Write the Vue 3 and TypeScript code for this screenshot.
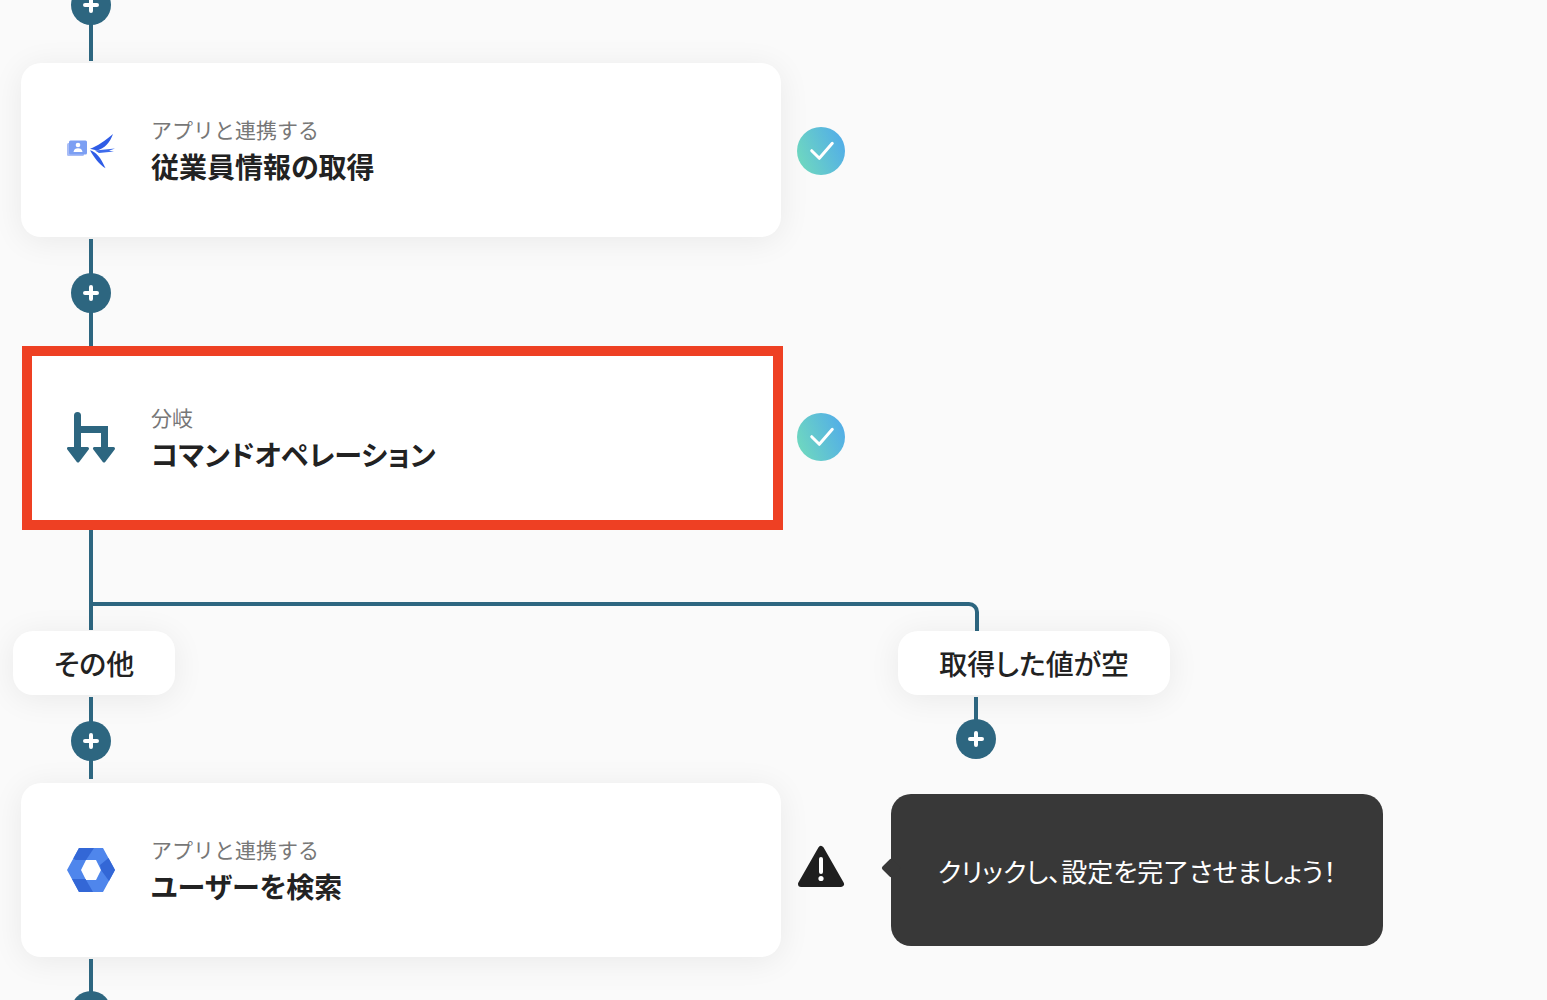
<script setup lang="ts">
interface Step {
  sub: string
  title: string
}
const employee: Step = { sub: 'アプリと連携する', title: '従業員情報の取得' }
const branch: Step = { sub: '分岐', title: 'コマンドオペレーション' }
const search: Step = { sub: 'アプリと連携する', title: 'ユーザーを検索' }
</script>

<template>
  <div class="page">
    <div class="flow">
      <div class="link link-top"><span class="plus plus-first"><svg viewBox="0 0 16 16"><path d="M8 2v12M2 8h12" /></svg></span></div>

      <div class="row">
        <div class="card">
          <svg class="app-icon" viewBox="0 0 48 48">
            <rect x="0" y="17" width="17" height="13" rx="1.5" fill="#a9bdf6" />
            <rect x="2" y="14.500" width="18" height="14" rx="1.500" fill="#7c9ff3" />
            <circle cx="11" cy="19" r="2.300" fill="#fff" />
            <path d="M6.500 26c.5-3 2-3.800 4.500-3.800s4 .8 4.500 3.800z" fill="#fff" />
            <path d="M23 22.800C30 20.500 39 14 46 8c-3 8.500-8.500 14.500-16 16.500z" fill="#2f5ce6" />
            <path d="M23 24.300c6 1.500 10.500 7 15.500 18C32 38.500 27 31.500 23 24.300z" fill="#2f5ce6" />
            <path d="M28 24.500l20-2-6 2.200 5 .8-15 1.500z" fill="#3f6cec" />
          </svg>
          <div class="text">
            <div class="sub">{{ employee.sub }}</div>
            <div class="title">{{ employee.title }}</div>
          </div>
        </div>
        <svg class="status status-low" viewBox="0 0 48 48">
          <defs>
            <linearGradient id="okA" x1="0" y1="0.700" x2="1" y2="0.300">
              <stop offset="0" stop-color="#6fd8bf" />
              <stop offset="1" stop-color="#52ade8" />
            </linearGradient>
          </defs>
          <circle cx="24" cy="24" r="24" fill="url(#okA)" />
          <path d="M14.700 23.700l7.600 7.600 13-15" fill="none" stroke="#fff" stroke-width="3" stroke-linecap="round" stroke-linejoin="round" />
        </svg>
      </div>

      <div class="link link-mid"><span class="plus plus-mid"><svg viewBox="0 0 16 16"><path d="M8 2v12M2 8h12" /></svg></span></div>

      <div class="row row-marked">
        <div class="marked">
          <svg class="branch-icon" viewBox="0 0 48 54">
            <path d="M10.500 4.500V38M10.500 18.500H37.500V38" fill="none" stroke="#2d6680" stroke-width="7" stroke-linecap="round" />
            <path d="M1.500 37.500h19L11 50zM27.500 37.500h19L37 50z" fill="#2d6680" stroke="#2d6680" stroke-width="3" stroke-linejoin="round" />
          </svg>
          <div class="text">
            <div class="sub">{{ branch.sub }}</div>
            <div class="title">{{ branch.title }}</div>
          </div>
        </div>
        <svg class="status status-high" viewBox="0 0 48 48">
          <defs>
            <linearGradient id="okB" x1="0" y1="0.700" x2="1" y2="0.300">
              <stop offset="0" stop-color="#6fd8bf" />
              <stop offset="1" stop-color="#52ade8" />
            </linearGradient>
          </defs>
          <circle cx="24" cy="24" r="24" fill="url(#okB)" />
          <path d="M14.700 23.700l7.600 7.600 13-15" fill="none" stroke="#fff" stroke-width="3" stroke-linecap="round" stroke-linejoin="round" />
        </svg>
      </div>

      <div class="branches">
        <div class="elbow"></div>
        <div class="link link-split"></div>
        <div class="columns">
          <div class="col">
            <div class="label">その他</div>
            <div class="link link-left"><span class="plus plus-left"><svg viewBox="0 0 16 16"><path d="M8 2v12M2 8h12" /></svg></span></div>
          </div>
          <div class="col col-right">
            <div class="label">取得した値が空</div>
            <div class="link link-right"><span class="plus plus-right"><svg viewBox="0 0 16 16"><path d="M8 2v12M2 8h12" /></svg></span></div>
          </div>
        </div>
      </div>

      <div class="row">
        <div class="card">
          <svg class="app-icon hex" viewBox="0 0 48 44">
            <path fill-rule="evenodd" d="M12 0H36L48 22 36 44H12L0 22zM19 12L14 22l5 10H29L34 22 29 12z" fill="#4f86ec" />
            <path d="M12 0H27L19 12H8.500L6.300 10.500z" fill="#3367d6" />
            <path d="M41.500 10L48 22 42 33 34 22 33 17z" fill="#3367d6" />
            <path d="M5 31H18.500L26 44H12z" fill="#3367d6" />
          </svg>
          <div class="text">
            <div class="sub">{{ search.sub }}</div>
            <div class="title">{{ search.title }}</div>
          </div>
        </div>
        <svg class="status status-warn" viewBox="0 0 48 48">
          <path d="M24 5L44 40H4z" fill="#1f1f1f" stroke="#1f1f1f" stroke-width="6" stroke-linejoin="round" />
          <path d="M24 15v13" stroke="#fff" stroke-width="4" stroke-linecap="round" />
          <circle cx="24" cy="34.500" r="2.600" fill="#fff" />
        </svg>
        <div class="tip">クリックし、設定を完了させましょう！</div>
      </div>

      <div class="link link-bottom"><span class="plus plus-last"><svg viewBox="0 0 16 16"><path d="M8 2v12M2 8h12" /></svg></span></div>
    </div>
  </div>
</template>

<style scoped>
.page {
  width: 1547px;
  height: 1000px;
  overflow: hidden;
  background: #fafafa;
  font-family: "Noto Sans CJK JP", "Noto Sans", sans-serif;
  color: #222;
}
.flow {
  display: flex;
  flex-direction: column;
  align-items: flex-start;
  padding-left: 21px;
  margin-top: -15px;
}
.link {
  width: 4px;
  margin-left: 68px;
  background: #2d6680;
  position: relative;
  flex: none;
}
.link-top { height: 76px; margin-bottom: 2px; }
.link-mid { height: 107px; margin-top: 2px; }
.link-bottom { height: 60px; margin-top: 2px; }
.link-split { height: 100px; margin-bottom: 1px; }
.link-left { height: 82px; margin: 2px 0 2px 76px; }
.link-right { height: 30px; margin: 2px 0 0 76px; }
.plus {
  position: absolute;
  left: -18px;
  width: 40px;
  height: 40px;
  border-radius: 50%;
  background: #2d6680;
  display: flex;
  align-items: center;
  justify-content: center;
}
.plus svg {
  width: 16px;
  height: 16px;
  fill: none;
  stroke: #fff;
  stroke-width: 4;
  stroke-linecap: round;
}
.plus-first { top: 0; }
.plus-mid { top: 34px; }
.plus-left { top: 24px; }
.plus-right { top: 22px; }
.plus-last { top: 32px; }
.row {
  display: flex;
  align-items: center;
  flex: none;
}
.card {
  width: 760px;
  height: 174px;
  box-sizing: border-box;
  padding-left: 46px;
  background: #fff;
  border-radius: 20px;
  box-shadow: 0 4px 32px rgba(0, 0, 0, 0.07);
  display: flex;
  align-items: center;
  gap: 36px;
}
.app-icon {
  width: 48px;
  height: 48px;
  flex: none;
}
.hex {
  height: 44px;
}
.text {
  display: flex;
  flex-direction: column;
}
.sub {
  font-size: 21px;
  line-height: 30px;
  color: #777;
}
.title {
  font-size: 28px;
  line-height: 40px;
  margin-top: 2px;
  font-weight: 700;
  color: #222;
  font-feature-settings: "palt";
}
.status {
  width: 48px;
  height: 48px;
  flex: none;
  margin-left: 16px;
}
.status-low { margin-top: 2px; }
.status-high { margin-left: 14px; margin-bottom: 2px; }
.status-warn { margin-top: -4px; }
.row-marked {
  margin-left: 1px;
}
.marked {
  width: 761px;
  height: 184px;
  box-sizing: border-box;
  border: 10px solid #ee4023;
  padding-left: 35px;
  background: #fff;
  display: flex;
  align-items: center;
  gap: 36px;
}
.branch-icon {
  width: 48px;
  height: 54px;
  flex: none;
}
.branches {
  position: relative;
  flex: none;
  margin-bottom: 2px;
}
.elbow {
  position: absolute;
  left: 70px;
  top: 72px;
  width: 884px;
  height: 28px;
  border-top: 4px solid #2d6680;
  border-right: 4px solid #2d6680;
  border-top-right-radius: 10px;
  box-sizing: content-box;
}
.columns {
  display: flex;
  margin-left: -8px;
  gap: 723px;
  align-items: flex-start;
}
.col {
  display: flex;
  flex-direction: column;
  align-items: flex-start;
  flex: none;
}
.label {
  height: 64px;
  box-sizing: border-box;
  padding: 0 41px;
  display: flex;
  align-items: center;
  background: #fff;
  border-radius: 20px;
  box-shadow: 0 4px 32px rgba(0, 0, 0, 0.07);
  font-size: 28px;
  font-weight: 500;
  color: #222;
  white-space: nowrap;
  position: relative;
  font-feature-settings: "palt";
}
.tip {
  position: relative;
  flex: none;
  width: 492px;
  height: 152px;
  margin-left: 46px;
  border-radius: 20px;
  background: #383838;
  color: #fff;
  font-size: 26px;
  display: flex;
  align-items: center;
  justify-content: center;
  white-space: nowrap;
  font-feature-settings: "palt";
}
.tip::before {
  content: "";
  position: absolute;
  left: -7px;
  top: 50%;
  width: 14px;
  height: 14px;
  margin-top: -9px;
  background: #383838;
  transform: rotate(45deg);
  border-radius: 2px;
}
</style>
